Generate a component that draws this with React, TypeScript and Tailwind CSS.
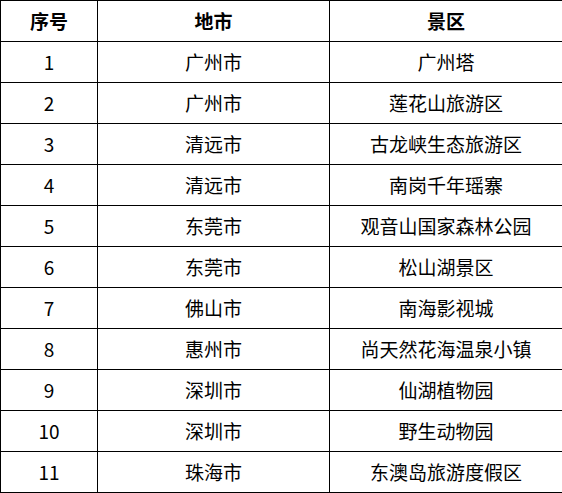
const rows: [number, string, string][] = [
  [1, '广州市', '广州塔'],
  [2, '广州市', '莲花山旅游区'],
  [3, '清远市', '古龙峡生态旅游区'],
  [4, '清远市', '南岗千年瑶寨'],
  [5, '东莞市', '观音山国家森林公园'],
  [6, '东莞市', '松山湖景区'],
  [7, '佛山市', '南海影视城'],
  [8, '惠州市', '尚天然花海温泉小镇'],
  [9, '深圳市', '仙湖植物园'],
  [10, '深圳市', '野生动物园'],
  [11, '珠海市', '东澳岛旅游度假区'],
];

export default function App() {
  return (
    <div className="w-[562px] h-[493px] bg-white">
      <table
        className="w-[562px] table-fixed border-collapse text-[19px] text-black"
        style={{ fontFamily: '"Noto Sans CJK SC", "Noto Sans", sans-serif' }}
      >
        <colgroup>
          <col className="w-[97px]" />
          <col className="w-[232px]" />
          <col className="w-[233px]" />
        </colgroup>
        <thead>
          <tr className="h-[41px]">
            <th className="border border-black text-center font-bold p-0">序号</th>
            <th className="border border-black text-center font-bold p-0">地市</th>
            <th className="border border-black text-center font-bold p-0">景区</th>
          </tr>
        </thead>
        <tbody>
          {rows.map(([n, city, spot]) => (
            <tr key={n} className="h-[41px]">
              <td className="border border-black text-center p-0">{n}</td>
              <td className="border border-black text-center p-0">{city}</td>
              <td className="border border-black text-center p-0">{spot}</td>
            </tr>
          ))}
        </tbody>
      </table>
    </div>
  );
}
